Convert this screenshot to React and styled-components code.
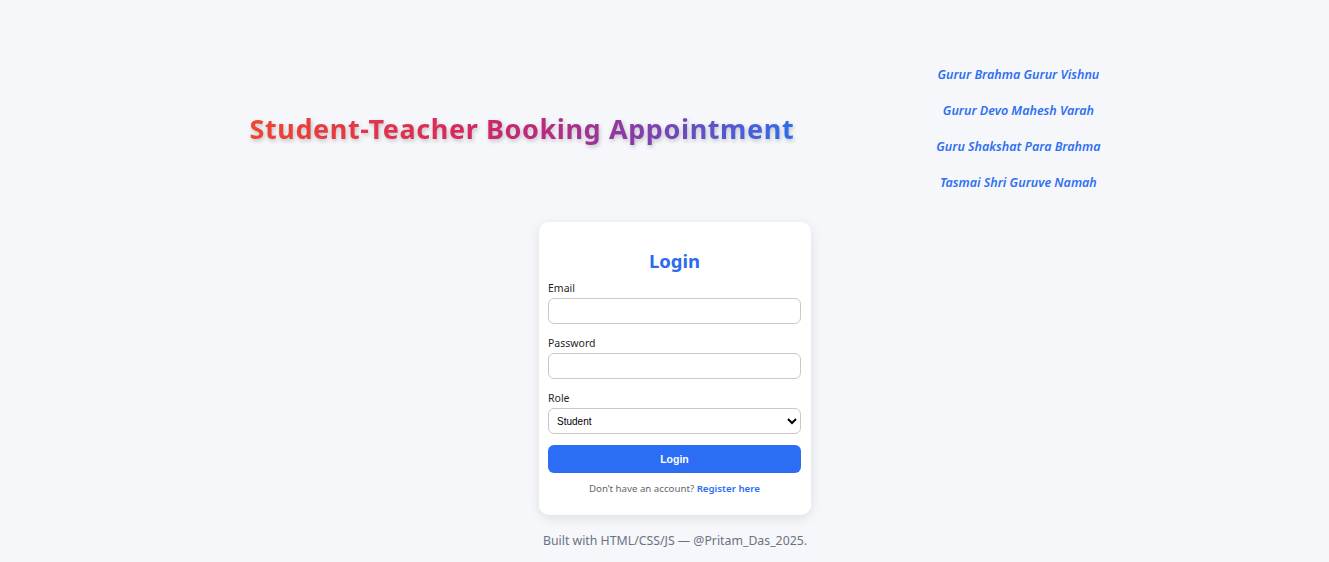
import React from 'react'
import styled, { createGlobalStyle } from 'styled-components'

const GlobalStyle = createGlobalStyle`
  html, body {
    margin: 0;
    padding: 0;
    background: #f5f7fb;
    font-family: "Noto Sans", "Open Sans", sans-serif;
  }
  * { box-sizing: border-box; }
`

const Page = styled.div`
  min-height: 562px;
  display: flex;
  flex-direction: column;
  align-items: center;
  padding-left: 21px;
`

const Header = styled.header`
  display: flex;
  align-items: center;
  justify-content: center;
  gap: 142px;
  padding-top: 57px;
`

const Title = styled.h1`
  margin: 0 0 2px;
  font-size: 27px;
  font-weight: 700;
  letter-spacing: 0.6px;
  background: linear-gradient(90deg, #ee4630 0%, #d9285c 38%, #b72a80 55%, #8a3ba6 70%, #2d6cee 100%);
  -webkit-background-clip: text;
  background-clip: text;
  color: transparent;
  filter: drop-shadow(1px 2px 2px rgba(0, 0, 0, 0.22));
`

const Quotes = styled.div`
  display: flex;
  flex-direction: column;
  align-items: center;
`

const Quote = styled.p`
  margin: 0;
  line-height: 36px;
  font-size: 12.5px;
  font-style: italic;
  font-weight: 600;
  color: #2f6ff0;
`

const Card = styled.form`
  margin-top: 21px;
  width: 272px;
  background: #fff;
  border-radius: 10px;
  padding: 20px 10px 19px 9px;
  box-shadow: 0 3px 12px rgba(0, 0, 0, 0.1);
`

const Heading = styled.h2`
  margin: 7px 0 8px;
  text-align: center;
  font-size: 18.5px;
  line-height: 24px;
  font-weight: 700;
  color: #2b6cec;
`

const Field = styled.div`
  display: flex;
  flex-direction: column;
  gap: 2px;
  margin-bottom: ${p => p.last ? 11 : 12}px;
`

const Label = styled.label`
  font-size: 10.5px;
  line-height: 15px;
  color: #1f1f1f;
`

const Input = styled.input`
  height: 26px;
  width: 100%;
  border: 1px solid #c9c9c9;
  border-radius: 6px;
  background: #fff;
  outline: none;
`

const Select = styled.select`
  height: 26px;
  width: 100%;
  border: 1px solid #c9c9c9;
  border-radius: 6px;
  background: #fff;
  padding: 0 4px 0 4px;
  font-family: "Liberation Sans", Arial, sans-serif;
  font-size: 10px;
  color: #000;
`

const Button = styled.button`
  width: 100%;
  height: 28px;
  border: none;
  border-radius: 6px;
  background: #2b6ef5;
  color: #fff;
  font-family: "Liberation Sans", Arial, sans-serif;
  font-weight: 700;
  font-size: 10.5px;
`

const Switch = styled.p`
  margin: 9px 0 0;
  text-align: center;
  font-size: 9.7px;
  line-height: 14px;
  color: #666;
`

const Link = styled.a`
  color: #2b6ef5;
  font-weight: 600;
  text-decoration: none;
`

const Footer = styled.footer`
  margin-top: 17px;
  font-size: 12.3px;
  color: #6b7280;
`

const lines = [
  'Gurur Brahma Gurur Vishnu',
  'Gurur Devo Mahesh Varah',
  'Guru Shakshat Para Brahma',
  'Tasmai Shri Guruve Namah',
]

export default function App () {
  return (
    <Page>
      <GlobalStyle />
      <Header>
        <Title>Student-Teacher Booking Appointment</Title>
        <Quotes>
          {lines.map(l => <Quote key={l}>{l}</Quote>)}
        </Quotes>
      </Header>
      <Card onSubmit={e => e.preventDefault()}>
        <Heading>Login</Heading>
        <Field>
          <Label>Email</Label>
          <Input type="email" />
        </Field>
        <Field>
          <Label>Password</Label>
          <Input type="password" />
        </Field>
        <Field last>
          <Label>Role</Label>
          <Select defaultValue="student">
            <option value="student">Student</option>
            <option value="teacher">Teacher</option>
          </Select>
        </Field>
        <Button type="submit">Login</Button>
        <Switch>
          Don’t have an account? <Link href="#">Register here</Link>
        </Switch>
      </Card>
      <Footer>Built with HTML/CSS/JS — @Pritam_Das_2025.</Footer>
    </Page>
  )
}
